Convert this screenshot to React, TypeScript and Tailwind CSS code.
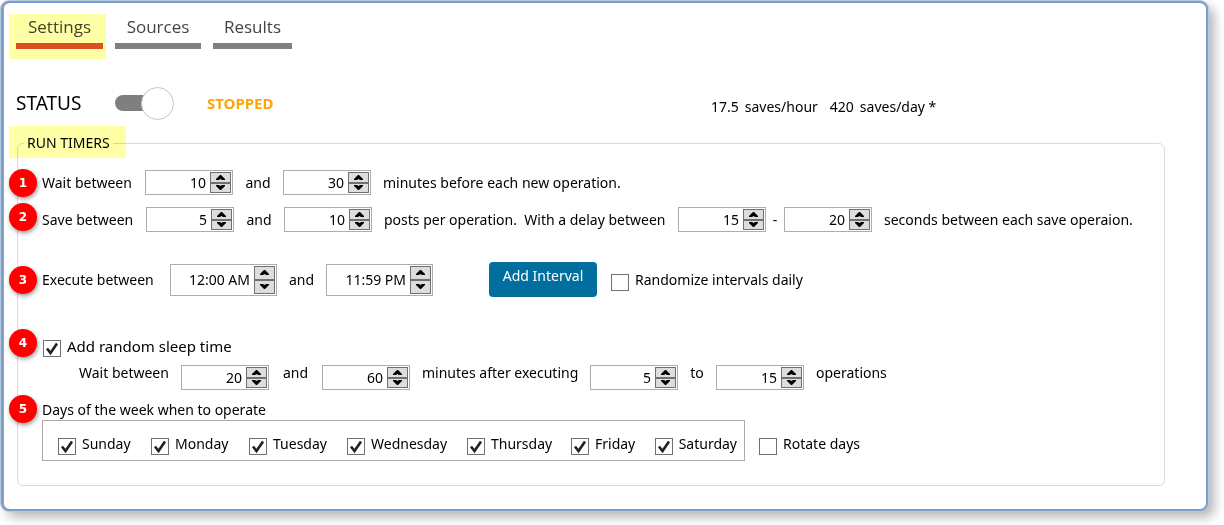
import { useState } from "react";
import clsx from "clsx";

function Spinner({ label, value, time = false }: { label: string; value: string; time?: boolean }) {
  const [text, setText] = useState(value);
  const step = (by: number) => {
    if (!time) setText(String(Math.max(0, Number(text) + by)));
  };
  const button = "flex min-h-0 flex-1 items-center justify-center border border-[#707070] bg-[#dddddd]";
  return (
    <div
      className={clsx(
        "flex shrink-0 border border-[#abadb3] bg-white p-px",
        time ? "h-8 w-[107px]" : "h-[25px] w-[88px]",
      )}
    >
      <input
        aria-label={label}
        value={text}
        onChange={(e) => setText(e.target.value)}
        className="w-0 min-w-0 flex-1 bg-transparent pr-1 text-right outline-none"
      />
      <div className="flex w-[21px] flex-col">
        <button type="button" aria-label={`Increase ${label}`} onClick={() => step(1)} className={button}>
          <svg width="9" height="5" viewBox="0 0 9 5">
            <path d="M4 0h1l4 4v1H6L4.500 4 3 5H0V4z" fill="#000" />
          </svg>
        </button>
        <button type="button" aria-label={`Decrease ${label}`} onClick={() => step(-1)} className={button}>
          <svg width="9" height="5" viewBox="0 0 9 5">
            <path d="M4 5h1l4-4V0H6L4.500 1 3 0H0v1z" fill="#000" />
          </svg>
        </button>
      </div>
    </div>
  );
}

function Check({ label, checked = false, className }: { label: string; checked?: boolean; className?: string }) {
  const [on, setOn] = useState(checked);
  return (
    <label className={clsx("flex shrink-0 items-start gap-1.5 whitespace-nowrap", className)}>
      <span className="relative mt-1 block h-[17px] w-[18px]">
        <input
          type="checkbox"
          checked={on}
          onChange={() => setOn(!on)}
          className="block h-full w-full appearance-none border border-[#707070] bg-white"
        />
        {on && (
          <svg className="pointer-events-none absolute inset-0" width="18" height="17" viewBox="0 0 18 17">
            <path d="M4 8.500L7.500 13 14 3.500" fill="none" stroke="#212121" strokeWidth="2.600" />
          </svg>
        )}
      </span>
      <span>{label}</span>
    </label>
  );
}

function Badge({ n, className }: { n: number; className: string }) {
  return (
    <span
      className={clsx(
        "absolute -left-2 flex h-7 w-7 items-center justify-center rounded-full bg-[#fe0000] font-['DejaVu_Sans',sans-serif] text-xs font-bold text-white shadow-[1px_2px_4px_rgba(0,0,0,0.4)]",
        className,
      )}
    >
      {n}
    </span>
  );
}

const tabs = [
  { name: "Settings", width: "w-[87px]" },
  { name: "Sources", width: "w-[86px]" },
  { name: "Results", width: "w-[79px]" },
];

const days = [
  { name: "Sunday", width: "w-[93px]" },
  { name: "Monday", width: "w-[98px]" },
  { name: "Tuesday", width: "w-[98px]" },
  { name: "Wednesday", width: "w-[120px]" },
  { name: "Thursday", width: "w-[104px]" },
  { name: "Friday", width: "w-[84px]" },
  { name: "Saturday", width: "w-[82px]" },
];

export default function App() {
  const [tab, setTab] = useState("Settings");
  const [running, setRunning] = useState(false);
  const row = "flex items-center whitespace-nowrap";
  return (
    <div className="bg-white pt-px pr-4 pb-4 pl-px font-['Noto_Sans',sans-serif] text-sm leading-5 text-black">
      <main className="rounded-lg border-2 border-[#7d9dc9] bg-white pt-px pr-[41px] pb-[23px] pl-[13px] shadow-[inset_1px_0_0_#d08a9c,0_0_0_1px_#b7cbe0,6px_6px_12px_rgba(0,0,0,0.3)]">
        <nav className="flex gap-3 pt-2.5">
          {tabs.map((t) => (
            <button
              key={t.name}
              type="button"
              onClick={() => setTab(t.name)}
              className={clsx(
                "relative flex h-[35px] flex-col font-['Open_Sans',sans-serif] text-[17px] leading-[26px] text-[#444]",
                t.width,
              )}
            >
              <span className="h-[29px] w-full text-center">{t.name}</span>
              <span className={clsx("h-1.5 w-full", tab === t.name ? "bg-[#dd4f30]" : "bg-[#808080]")} />
              {tab === t.name && (
                <span className="absolute top-0 -right-[3px] -bottom-2.5 -left-[7px] bg-[#ffffa6] mix-blend-multiply" />
              )}
            </button>
          ))}
        </nav>

        <div className="mt-9 flex h-9 items-center">
          <span id="status" className="w-[99px] text-[19px]">STATUS</span>
          <button
            type="button"
            role="switch"
            aria-checked={running}
            aria-labelledby="status"
            onClick={() => setRunning(!running)}
            className="flex w-[59px] items-center"
          >
            <span className="h-4 w-[30px] rounded-l-full bg-[#7f7f7f]" />
            <span className="-ml-1 h-[33px] w-[33px] rounded-full border border-[#c8c2c5] bg-white" />
          </button>
          <span className="ml-[33px] text-[15px] font-bold text-[#ffa50a]">{running ? "RUNNING" : "STOPPED"}</span>
          <p className="ml-auto w-[454px] pt-2">
            <span className="mr-1.5">17.5</span>
            <span className="mr-3">saves/hour</span>
            <span className="mr-1.5">420</span>
            <span>saves/day *</span>
          </p>
        </div>

        <div className="relative mt-3 ml-px">
          <fieldset className="rounded-md border border-[#d3dde6] pb-6 pl-6">
            <legend className="-ml-[18px] px-[3px] leading-5">RUN TIMERS</legend>

            <div className={clsx(row, "mt-[17px]")}>
              <span className="w-[103px]">Wait between</span>
              <Spinner label="minimum wait" value="10" />
              <span className="w-[50px] text-center">and</span>
              <Spinner label="maximum wait" value="30" />
              <span className="ml-3">minutes before each new operation.</span>
            </div>

            <div className={clsx(row, "mt-3")}>
              <span className="w-[104px]">Save between</span>
              <Spinner label="minimum posts" value="5" />
              <span className="w-[50px] text-center">and</span>
              <Spinner label="maximum posts" value="10" />
              <span className="ml-3 w-[294px]">posts per operation.&nbsp; With a delay between</span>
              <Spinner label="minimum delay" value="15" />
              <span className="w-[18px] text-center">-</span>
              <Spinner label="maximum delay" value="20" />
              <span className="ml-3">seconds between each save operaion.</span>
            </div>

            <div className={clsx(row, "mt-[30px]")}>
              <span className="w-32">Execute between</span>
              <Spinner label="start time" value="12:00 AM" time />
              <span className="w-[49px] text-center">and</span>
              <Spinner label="end time" value="11:59 PM" time />
              <button type="button" className="ml-14 h-[35px] w-[108px] rounded bg-[#006f9f] pb-2 text-white">
                Add Interval
              </button>
              <Check label="Randomize intervals daily" className="ml-3.5 pt-0.5" />
            </div>

            <Check label="Add random sleep time" checked className="mt-[39px] ml-px text-[15px]" />

            <div className="mt-1.5 ml-[37px] flex items-start whitespace-nowrap">
              <span className="w-[102px]">Wait between</span>
              <div className="mt-0.5"><Spinner label="minimum sleep" value="20" /></div>
              <span className="w-[53px] text-center">and</span>
              <div className="mt-0.5"><Spinner label="maximum sleep" value="60" /></div>
              <span className="ml-3 w-[168px]">minutes after executing</span>
              <div className="mt-0.5"><Spinner label="minimum operations" value="5" /></div>
              <span className="w-[38px] text-center">to</span>
              <div className="mt-0.5"><Spinner label="maximum operations" value="15" /></div>
              <span className="ml-3">operations</span>
            </div>

            <p className="mt-2.5">Days of the week when to operate</p>
            <div className="flex items-center">
              <div className="flex h-[41px] w-[703px] items-center border border-[#ababab] pt-2 pl-[15px]">
                {days.map((d) => (
                  <Check key={d.name} label={d.name} checked className={d.width} />
                ))}
              </div>
              <Check label="Rotate days" className="ml-3.5 pt-2" />
            </div>
          </fieldset>

          <span className="absolute -top-[7px] -left-2 h-8 w-[117px] bg-[#ffffa6] mix-blend-multiply" />
          <Badge n={1} className="top-9" />
          <Badge n={2} className="top-[70px]" />
          <Badge n={3} className="top-[133px]" />
          <Badge n={4} className="top-[196px]" />
          <Badge n={5} className="top-[262px]" />
        </div>
      </main>
    </div>
  );
}
